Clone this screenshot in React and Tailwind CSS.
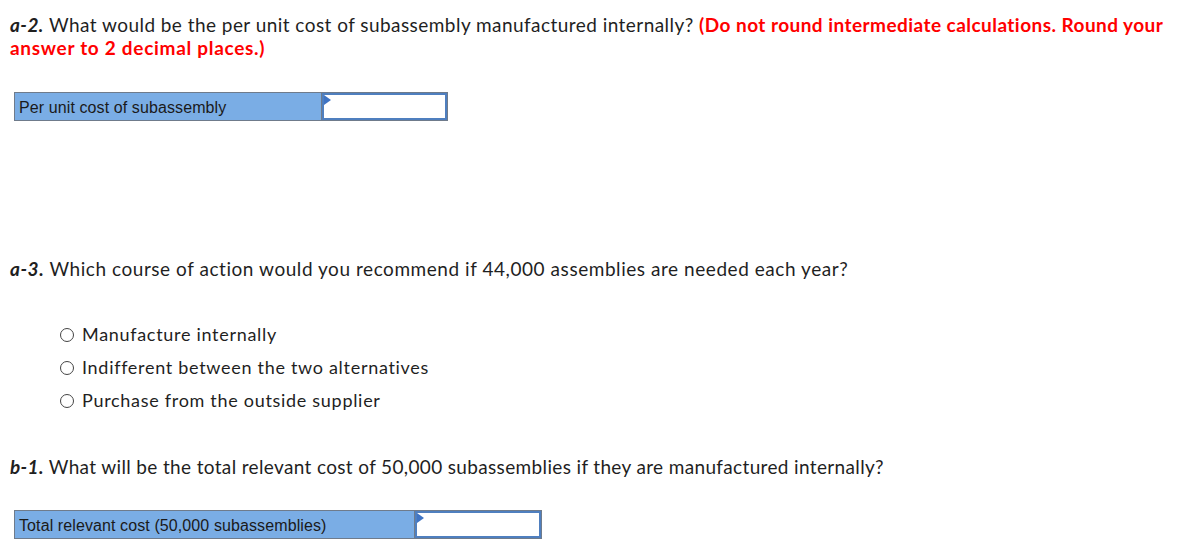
import React from 'react';

const AnswerRow = ({ label, labelWidth, inputWidth }) => (
    <div className="flex border border-[#6f7b8b] w-fit" style={{ fontFamily: '"Liberation Sans", Arial, sans-serif' }}>
        <div className={`${labelWidth} h-[27px] bg-[#7aade5] text-[16px] tracking-[0.1px] text-[#1a1a1a] pl-[4px] pt-[1px] flex items-center border-r border-[#6f7b8b]`}>
            {label}
        </div>
        <div className={`${inputWidth} h-[27px] bg-white relative border-2 border-[#4f7fbf]`}>
            <div className="absolute left-0 top-0 w-0 h-0 border-t-[5px] border-b-[5px] border-l-[7px] border-t-transparent border-b-transparent border-l-[#3f74c4]" />
        </div>
    </div>
);

const Radio = ({ label }) => (
    <div className="flex items-center h-[33px] text-[18px] tracking-[0.7px]">
        <span className="w-[14px] h-[14px] rounded-full border border-[#444] mr-[8px] bg-white" />
        <span>{label}</span>
    </div>
);

export default function App() {
    return (
        <div className="bg-white min-h-[554px] w-[1195px] text-[#1f1f1f] text-[19px] tracking-[0.55px] leading-[23px] pl-[10px] pt-[13px]" style={{ fontFamily: 'Lato, "Open Sans", sans-serif' }}>
            <p className="whitespace-nowrap">
                <span className="tracking-[0.45px]"><b className="italic">a-2.</b> What would be the per unit cost of subassembly manufactured internally?</span>{' '}
                <b className="text-[#ff0000] tracking-[0.45px]">(Do not round intermediate calculations. Round your<br /><span className="tracking-[0.7px]">answer to 2 decimal places.)</span></b>
            </p>
            <div className="mt-[33px] ml-[4px]">
                <AnswerRow label="Per unit cost of subassembly" labelWidth="w-[307px]" inputWidth="w-[125px]" />
            </div>
            <p className="mt-[136px]">
                <b className="italic">a-3.</b> Which course of action would you recommend if 44,000 assemblies are needed each year?
            </p>
            <div className="mt-[38px] ml-[50px]">
                <Radio label="Manufacture internally" />
                <Radio label="Indifferent between the two alternatives" />
                <Radio label="Purchase from the outside supplier" />
            </div>
            <p className="mt-[38px] tracking-[0.35px]">
                <b className="italic">b-1.</b> What will be the total relevant cost of 50,000 subassemblies if they are manufactured internally?
            </p>
            <div className="mt-[32px] ml-[4px]">
                <AnswerRow label="Total relevant cost (50,000 subassemblies)" labelWidth="w-[400px]" inputWidth="w-[126px]" />
            </div>
        </div>
    );
}
